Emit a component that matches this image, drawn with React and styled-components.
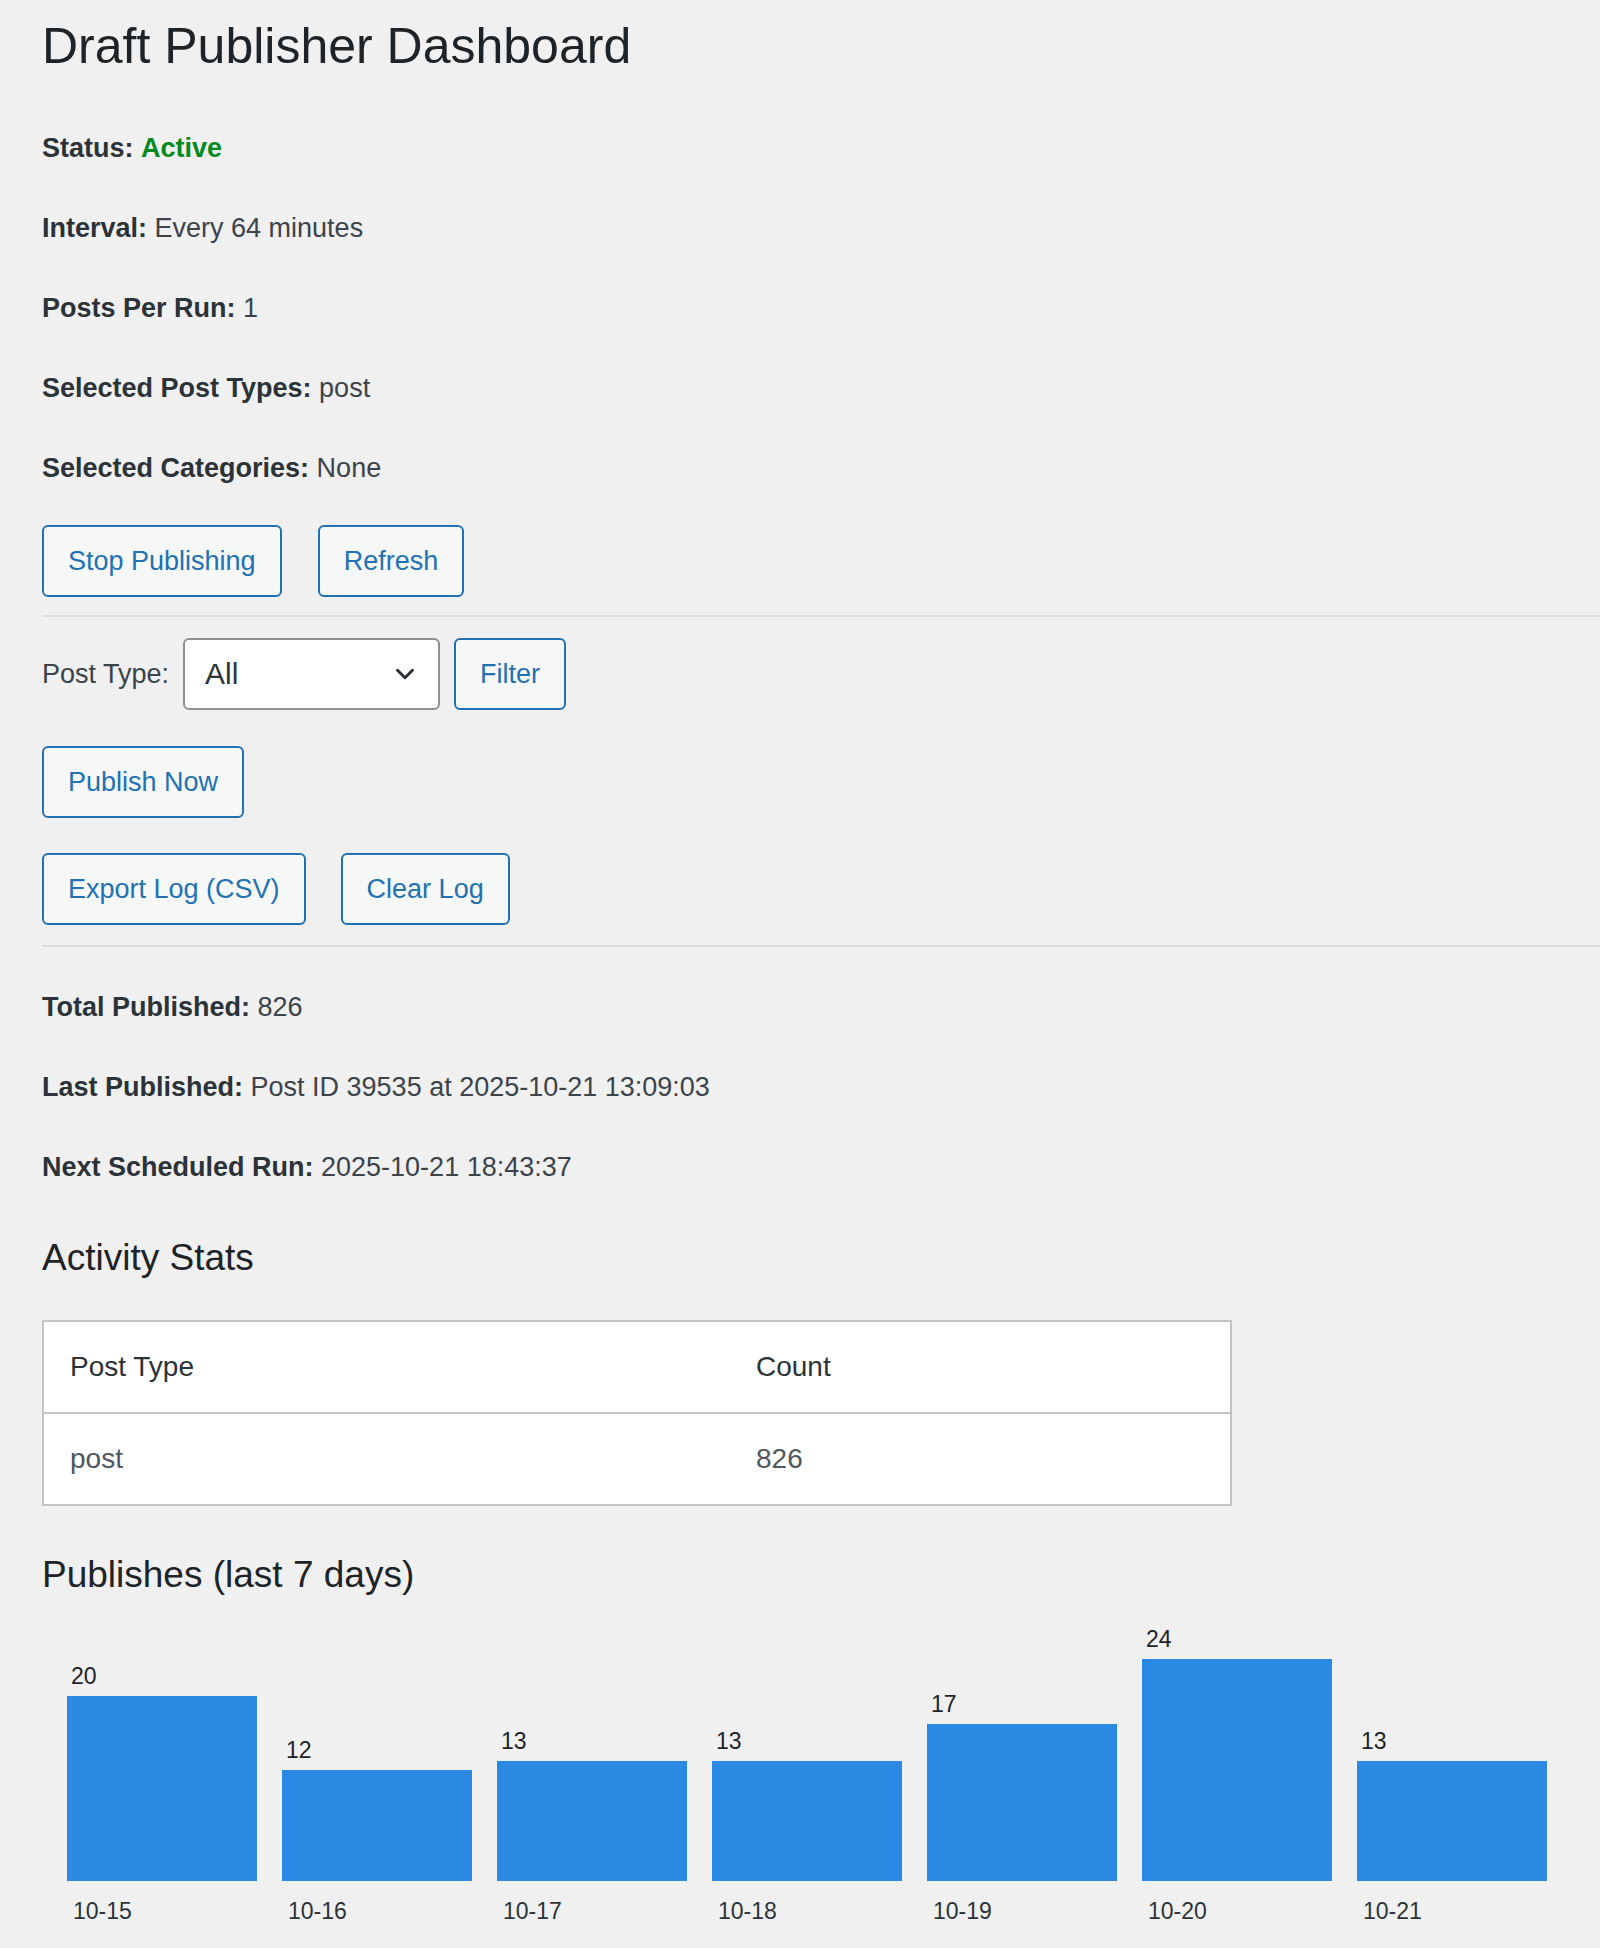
import React from 'react';
import styled, { createGlobalStyle } from 'styled-components';

const Global = createGlobalStyle`
  body {
    margin: 0;
    background: #f0f0f1;
    font-family: 'Liberation Sans', Arial, sans-serif;
    color: #3c434a;
  }
`;

const Page = styled.div`
  padding: 16px 0 40px 42px;
`;

const Title = styled.h1`
  margin: 0;
  font-size: 50px;
  line-height: 60px;
  font-weight: 400;
  color: #1d2327;
`;

const Info = styled.p`
  margin: ${p => p.first ? '52px' : '40px'} 0 0;
  font-size: 27px;
  line-height: 40px;
  b { font-weight: 700; color: #2c3338; }
`;

const Green = styled.span`
  color: #00a32a;
  font-weight: 700;
  color: #008a20;
`;

const Row = styled.div`
  display: flex;
  align-items: center;
  gap: ${p => p.gap || 28}px;
  margin-top: ${p => p.top}px;
`;

const Button = styled.button`
  height: 72px;
  padding: 0 24px;
  background: #f6f7f7;
  color: #2271b1;
  border: 2px solid #2271b1;
  border-radius: 6px;
  font-family: inherit;
  font-size: 27px;
`;

const Rule = styled.hr`
  margin: ${p => p.top}px 0 0;
  border: 0;
  border-top: 2px solid #dcdcde;
`;

const Label = styled.span`
  font-size: 27px;
`;

const Select = styled.div`
  width: 257px;
  height: 72px;
  box-sizing: border-box;
  display: flex;
  align-items: center;
  justify-content: space-between;
  padding: 0 18px 0 20px;
  background: #fff;
  border: 2px solid #8c8f94;
  border-radius: 6px;
  font-size: 30px;
  color: #2c3338;
`;

const H2 = styled.h2`
  margin: ${p => p.top}px 0 0;
  font-size: 37px;
  line-height: 44px;
  font-weight: 400;
  color: #1d2327;
`;

const Table = styled.table`
  margin-top: 40px;
  width: 1190px;
  border-collapse: collapse;
  background: #fff;
  border: 2px solid #c3c4c7;
  font-size: 28px;
  td { height: 90px; padding: 0 0 0 26px; }
  tr + tr td { border-top: 2px solid #c3c4c7; color: #50575e; }
  td:first-child { width: 660px; }
  tr:first-child td { color: #2c3338; }
`;

const Chart = styled.div`
  display: flex;
  align-items: flex-end;
  gap: 25px;
  margin-top: 30px;
  padding-left: 25px;
`;

const Col = styled.div`
  width: 190px;
  font-size: 23px;
  color: #1d2327;
`;

const Value = styled.div`
  line-height: 24px;
  margin: 0 0 8px 4px;
`;

const Bar = styled.div`
  background: #2a8ae3;
`;

const Day = styled.div`
  line-height: 24px;
  margin: 18px 0 0 6px;
  color: #2c3338;
`;

const days = [
  ['10-15', 20], ['10-16', 12], ['10-17', 13], ['10-18', 13],
  ['10-19', 17], ['10-20', 24], ['10-21', 13],
];

export default function App() {
  return (
    <Page>
      <Global />
      <Title>Draft Publisher Dashboard</Title>
      <Info first><b>Status:</b> <Green>Active</Green></Info>
      <Info><b>Interval:</b> Every 64 minutes</Info>
      <Info><b>Posts Per Run:</b> 1</Info>
      <Info><b>Selected Post Types:</b> post</Info>
      <Info><b>Selected Categories:</b> None</Info>
      <Row top={37} gap={36}>
        <Button>Stop Publishing</Button>
        <Button>Refresh</Button>
      </Row>
      <Rule top={18} />
      <Row top={21} gap={14}>
        <Label>Post Type:</Label>
        <Select>
          All
          <svg width="30" height="30" viewBox="0 0 24 24" fill="none" stroke="#2c3338" strokeWidth="2.4" strokeLinecap="round" strokeLinejoin="round"><path d="M6 9l6 6 6-6" /></svg>
        </Select>
        <Button>Filter</Button>
      </Row>
      <Row top={36}>
        <Button>Publish Now</Button>
      </Row>
      <Row top={35} gap={35}>
        <Button>Export Log (CSV)</Button>
        <Button>Clear Log</Button>
      </Row>
      <Rule top={20} />
      <Info first style={{ marginTop: 40 }}><b>Total Published:</b> 826</Info>
      <Info><b>Last Published:</b> Post ID 39535 at 2025-10-21 13:09:03</Info>
      <Info><b>Next Scheduled Run:</b> 2025-10-21 18:43:37</Info>
      <H2 top={49}>Activity Stats</H2>
      <Table>
        <tbody>
          <tr><td>Post Type</td><td>Count</td></tr>
          <tr><td>post</td><td>826</td></tr>
        </tbody>
      </Table>
      <H2 top={47}>Publishes (last 7 days)</H2>
      <Chart>
        {days.map(([d, n]) => (
          <Col key={d}>
            <Value>{n}</Value>
            <Bar style={{ height: n * 9.25 }} />
            <Day>{d}</Day>
          </Col>
        ))}
      </Chart>
    </Page>
  );
}
